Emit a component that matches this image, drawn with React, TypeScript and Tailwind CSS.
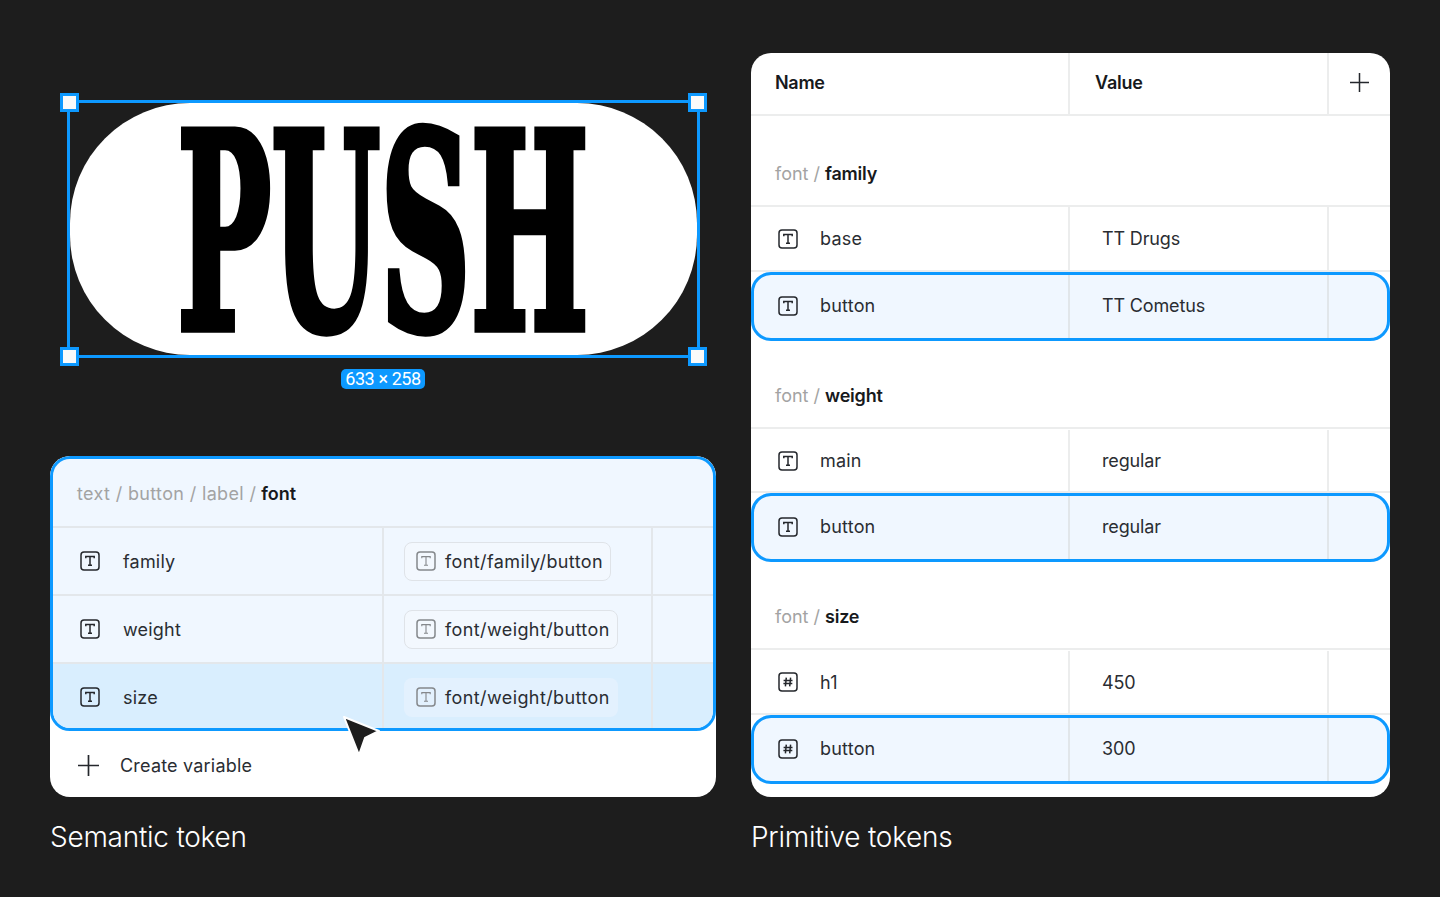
import React from 'react';

const TypeIcon = ({ muted = false }: { muted?: boolean }) => (
    <svg width="20" height="20" viewBox="0 0 20 20" fill="none" stroke={muted ? '#85888c' : '#24272c'} className="shrink-0">
        <rect x="1" y="1" width="18" height="18" rx="3" strokeWidth="1.5" />
        <path d="M5.8 7.2V5.6h8.4v1.6M10 5.6v8.6M8 14.3h4" strokeWidth={muted ? 1.1 : 1.5} />
    </svg>
);

const HashIcon = () => (
    <svg width="20" height="20" viewBox="0 0 20 20" fill="none" stroke="#24272c" className="shrink-0">
        <rect x="1" y="1" width="18" height="18" rx="3" strokeWidth="1.5" />
        <path d="M8.3 5.6 7.4 14.4M12.6 5.6l-.9 8.8M5.6 8.4h8.9M5.4 11.6h8.9" strokeWidth="1.5" />
    </svg>
);

const PlusIcon = ({ size }: { size: number }) => (
    <svg width={size} height={size} viewBox="0 0 20 20" fill="none" stroke="#24272c" strokeWidth="1.6" className="shrink-0">
        <path d="M10 0v20M0 10h20" />
    </svg>
);

const Handle = ({ className }: { className: string }) => (
    <div className={`absolute w-[19px] h-[19px] bg-[#fafafa] border-[3px] border-[#0d99ff] ${className}`}></div>
);

const Chip = ({ label, flat = false }: { label: string; flat?: boolean }) => (
    <div className={`h-[39px] flex items-center gap-[9px] pl-[11px] pr-[7px] rounded-[8px] border ${flat ? 'bg-[#e3f1fe] border-transparent' : 'bg-[#f3f8fe] border-[#dfe3e8]'}`}>
        <TypeIcon muted />
        <span className="text-[18px] text-[#2a2d32] tracking-[0.4px]">{label}</span>
    </div>
);

const SemanticRow = ({ name, chip, active = false }: { name: string; chip: string; active?: boolean }) => (
    <div className={`grid grid-cols-[331px_269px_1fr] ${active ? 'h-[66px] shrink-0 bg-[#d9eefe]' : 'h-[68px] border-b-2 border-[#e3e7eb]'}`}>
        <div className="flex items-center gap-[23px] pl-[27px] border-r-2 border-[#e3e7eb]">
            <TypeIcon />
            <span className="text-[18px] text-[#2a2d32] tracking-[0.2px]">{name}</span>
        </div>
        <div className="flex items-center pl-[20px] border-r-2 border-[#e3e7eb]">
            <Chip label={chip} flat={active} />
        </div>
        <div></div>
    </div>
);

const GroupTitle = ({ part, h }: { part: string; h: string }) => (
    <div className={`flex items-end pb-[18px] pl-[24px] border-b-2 border-[#eceded] text-[18px] ${h}`}>
        <span className="text-[#a3a3a3]">font / </span>
        <span className="font-semibold text-[#17191c] ml-[5px] tracking-[-0.2px]">{part}</span>
    </div>
);

const TokenRow = ({ name, value, h = 'h-[65px]', hash = false }: { name: string; value: string; h?: string; hash?: boolean }) => (
    <div className={`grid grid-cols-[319px_259px_1fr] border-b-2 border-[#eceded] ${h}`}>
        <div className="flex items-center gap-[22px] pl-[27px] border-r-2 border-[#eceded]">
            {hash ? <HashIcon /> : <TypeIcon />}
            <span className="text-[18px] text-[#2a2d32] tracking-[0.2px]">{name}</span>
        </div>
        <div className="flex items-center pl-[32px] border-r-2 border-[#eceded]">
            <span className="text-[18px] text-[#2a2d32] tracking-[-0.15px]">{value}</span>
        </div>
        <div></div>
    </div>
);

const ActiveRow = ({ name, value, hash = false }: { name: string; value: string; hash?: boolean }) => (
    <div className="grid grid-cols-[316px_259px_1fr] h-[69px] rounded-[20px] border-[3px] border-[#0d99ff] bg-[#f0f7ff]">
        <div className="flex items-center gap-[22px] pl-[24px] pb-[2px] border-r-2 border-[#e1e6ea]">
            {hash ? <HashIcon /> : <TypeIcon />}
            <span className="text-[18px] text-[#2a2d32] tracking-[0.2px]">{name}</span>
        </div>
        <div className="flex items-center pl-[32px] pb-[2px] border-r-2 border-[#e1e6ea]">
            <span className="text-[18px] text-[#2a2d32] tracking-[-0.15px]">{value}</span>
        </div>
        <div></div>
    </div>
);

export default function App() {
    return (
        <div className="w-full h-[897px] bg-[#1d1d1d] flex gap-[35px] pl-[50px] pt-[53px] overflow-hidden font-['Inter',sans-serif]">
            {/* Left column */}
            <div className="w-[666px] flex flex-col">
                <div className="h-[403px] pt-[47px] flex flex-col items-center">
                    <div className="relative w-[633px] h-[258px] border-[3px] border-[#0d99ff]">
                        <div className="w-full h-full bg-white rounded-[120px] flex items-center justify-center">
                            <span className="inline-block text-black font-bold text-[139px] leading-[0.75] scale-y-[1.96] mt-[8px] font-['DejaVu_Serif_Condensed',serif] [-webkit-text-stroke:4px_#000]">PUSH</span>
                        </div>
                        <Handle className="-left-[10px] -top-[10px]" />
                        <Handle className="-right-[10px] -top-[10px]" />
                        <Handle className="-left-[10px] -bottom-[11px]" />
                        <Handle className="-right-[10px] -bottom-[11px]" />
                    </div>
                    <div className="mt-[11px] h-[20px] px-[4px] bg-[#0d99ff] rounded-[5px] flex items-center text-white text-[18px] leading-none tracking-[-0.4px] font-['Roboto',sans-serif]">
                        633 × 258
                    </div>
                </div>

                <div className="relative h-[341px] rounded-[20px] bg-white overflow-hidden">
                    <div className="h-[275px] rounded-[20px] border-[3px] border-[#0d99ff] bg-[#f0f7ff] overflow-hidden">
                        <div className="h-[69px] flex items-center pl-[24px] border-b-2 border-[#e3e7eb] text-[18px] pt-[2px]">
                            <span className="text-[#a3a3a3] tracking-[0.35px]">text / button / label / </span>
                            <span className="font-semibold text-[#17191c] ml-[5px]">font</span>
                        </div>
                        <SemanticRow name="family" chip="font/family/button" />
                        <SemanticRow name="weight" chip="font/weight/button" />
                        <SemanticRow name="size" chip="font/weight/button" active />
                    </div>
                    <div className="h-[66px] flex items-center gap-[21px] pl-[28px] pt-[2px]">
                        <PlusIcon size={21} />
                        <span className="text-[18px] text-[#2a2d32] tracking-[0.2px]">Create variable</span>
                    </div>
                    {/* Cursor */}
                    <svg width="42" height="44" viewBox="0 0 42 44" className="absolute left-[291px] top-[257px]">
                        <path d="M3 4 38 18 24 25 18 42Z" fill="#1e1e1e" stroke="#fff" strokeWidth="2" strokeLinejoin="round" />
                    </svg>
                </div>

                <div className="mt-[24px] text-[28px] leading-[33px] font-light text-white tracking-[-0.25px]">Semantic token</div>
            </div>

            {/* Right column */}
            <div className="w-[639px] flex flex-col">
                <div className="h-[744px] rounded-[20px] bg-white overflow-hidden">
                    <div className="h-[63px] grid grid-cols-[319px_259px_1fr] border-b-2 border-[#eceded]">
                        <div className="flex items-center pl-[24px] pb-[2px] border-r-2 border-[#eceded] text-[18px] font-semibold text-[#17191c] tracking-[-0.3px]">Name</div>
                        <div className="flex items-center pl-[25px] pb-[2px] border-r-2 border-[#eceded] text-[18px] font-semibold text-[#17191c] tracking-[-0.2px]">Value</div>
                        <div className="flex items-center justify-center pb-[2px]">
                            <PlusIcon size={19} />
                        </div>
                    </div>
                    <GroupTitle part="family" h="h-[91px]" />
                    <TokenRow name="base" value="TT Drugs" />
                    <ActiveRow name="button" value="TT Cometus" />
                    <GroupTitle part="weight" h="h-[88px]" />
                    <TokenRow name="main" value="regular" h="h-[64px] pt-[1px]" />
                    <ActiveRow name="button" value="regular" />
                    <GroupTitle part="size" h="h-[88px]" />
                    <TokenRow name="h1" value="450" h="h-[65px] pt-[1px]" hash />
                    <ActiveRow name="button" value="300" hash />
                </div>
                <div className="mt-[24px] text-[28px] leading-[33px] font-light text-white tracking-[-0.25px]">Primitive tokens</div>
            </div>
        </div>
    );
}
